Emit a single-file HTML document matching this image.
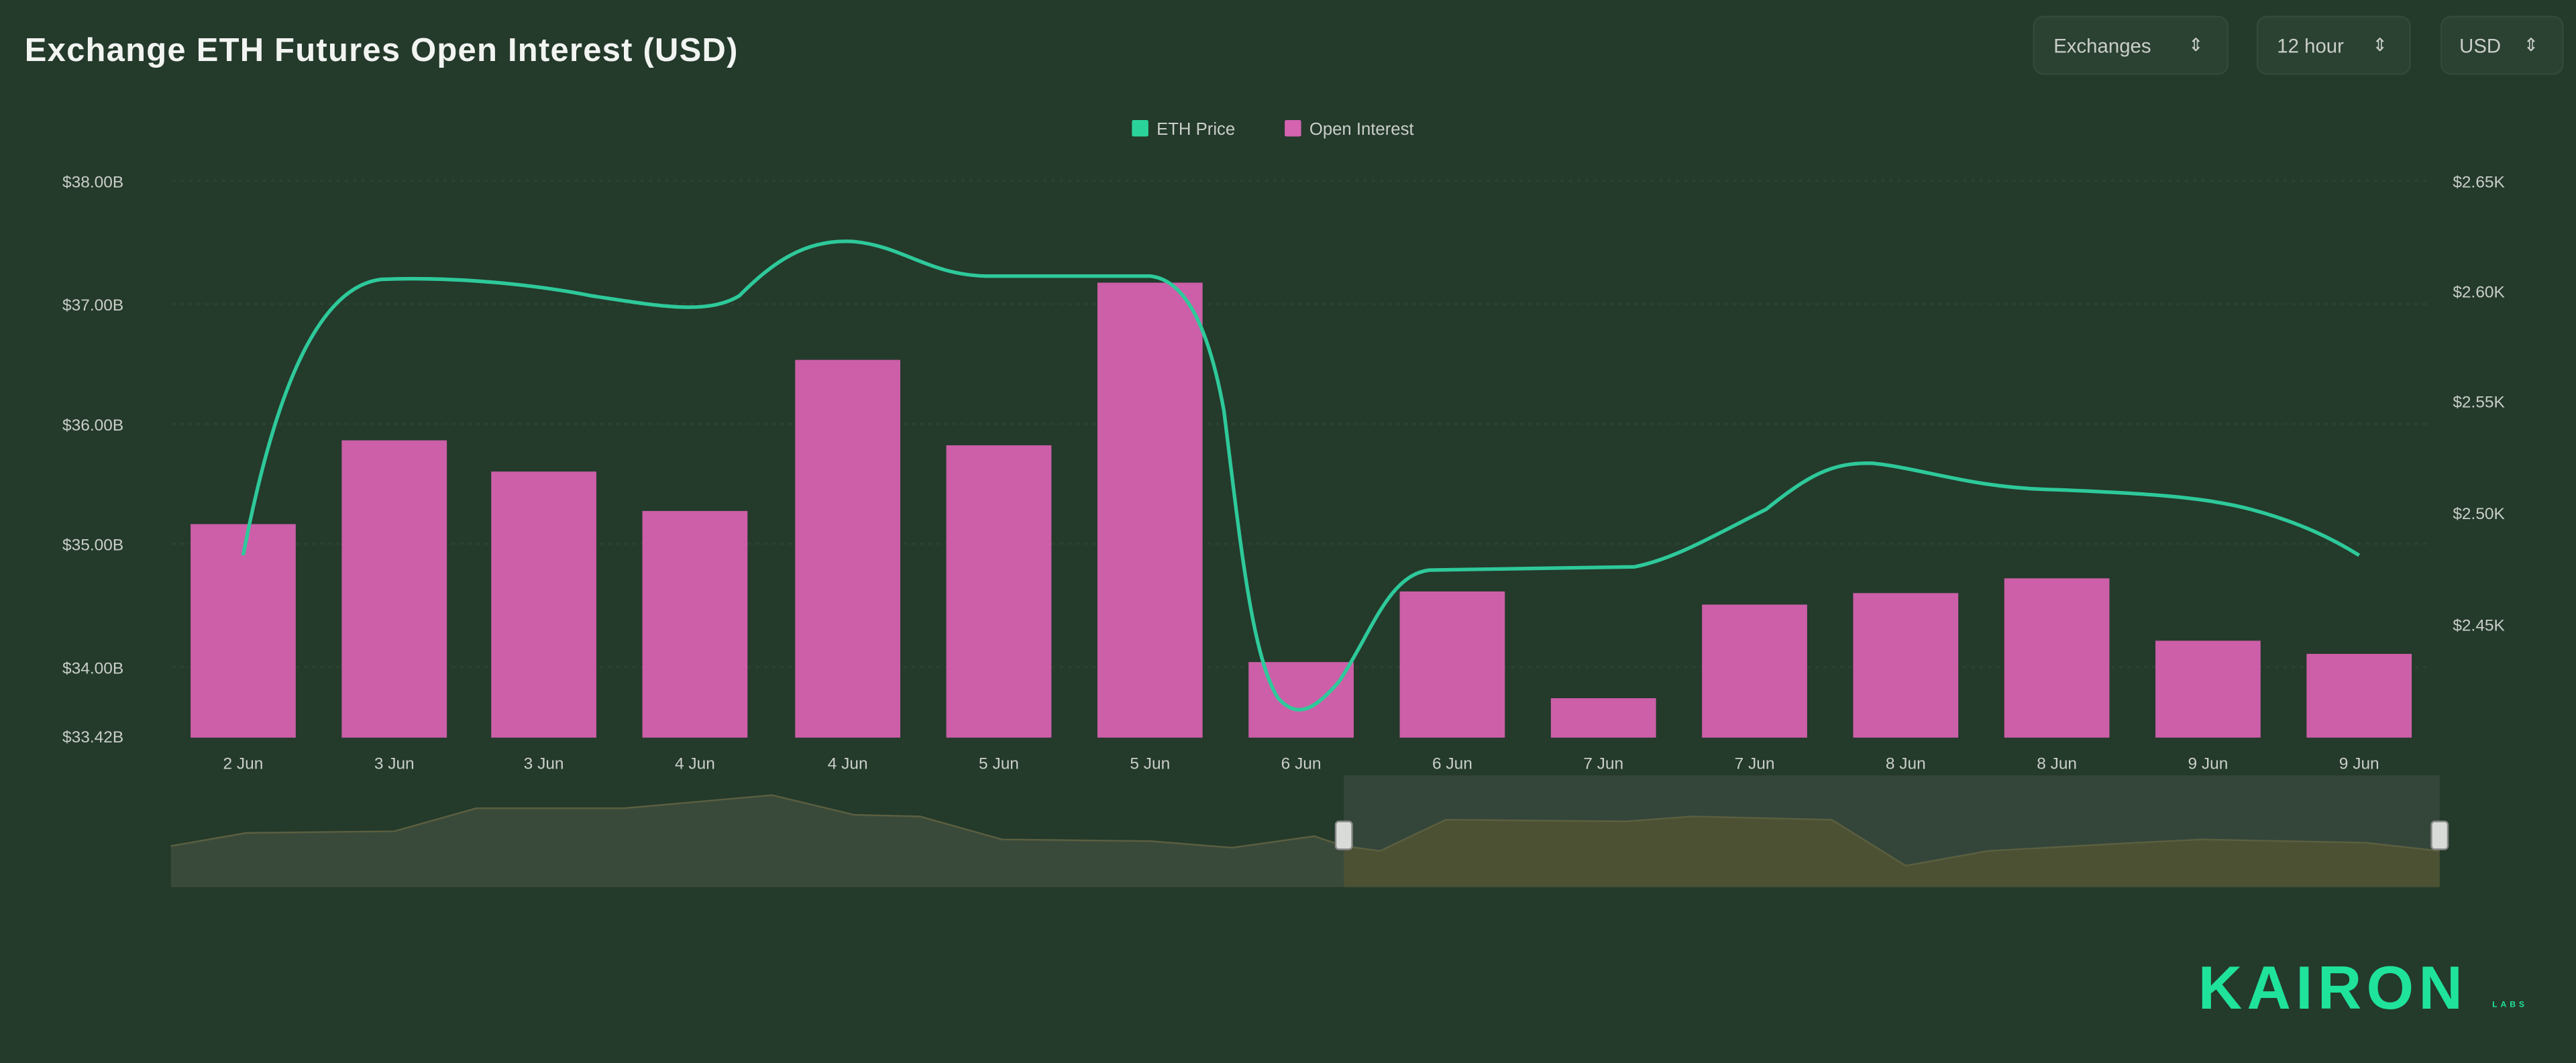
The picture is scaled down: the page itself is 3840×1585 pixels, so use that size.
<!DOCTYPE html>
<html><head><meta charset="utf-8"><style>
html,body{margin:0;padding:0;background:#243a2b;}
svg{display:block}
text{font-family:"Liberation Sans",sans-serif;}
</style></head><body>
<svg width="3840" height="1585" viewBox="0 0 1568 647" xmlns="http://www.w3.org/2000/svg">
<rect width="1568" height="647" fill="#243a2b"/>
<text x="15" y="37" font-size="20" font-weight="bold" fill="#f2f4f2" letter-spacing="0.5">Exchange ETH Futures Open Interest (USD)</text>
<g font-size="12" fill="#c9cec9">
<rect x="1238" y="10" width="118" height="35" rx="6" fill="#2b4132" stroke="#33493a"/>
<text x="1250" y="32">Exchanges</text>
<text x="1332" y="31" font-size="11">⇕</text>
<rect x="1374" y="10" width="93" height="35" rx="6" fill="#2b4132" stroke="#33493a"/>
<text x="1386" y="32">12 hour</text>
<text x="1444" y="31" font-size="11">⇕</text>
<rect x="1486" y="10" width="74" height="35" rx="6" fill="#2b4132" stroke="#33493a"/>
<text x="1497" y="32">USD</text>
<text x="1536" y="31" font-size="11">⇕</text>
</g>
<rect x="689" y="73" width="10" height="10" rx="1" fill="#2bd39b"/>
<text x="704" y="82" font-size="10.5" fill="#c9cec9">ETH Price</text>
<rect x="782" y="73" width="10" height="10" rx="1" fill="#d463b0"/>
<text x="797" y="82" font-size="10.5" fill="#c9cec9">Open Interest</text>
<g stroke="#2e4434" stroke-width="1" stroke-dasharray="2,3">
<line x1="105" y1="110" x2="1480" y2="110"/><line x1="105" y1="185" x2="1480" y2="185"/><line x1="105" y1="258" x2="1480" y2="258"/><line x1="105" y1="331" x2="1480" y2="331"/><line x1="105" y1="406" x2="1480" y2="406"/>
</g>
<g font-size="10" fill="#c9cec9">
<text x="38" y="114">$38.00B</text><text x="38" y="189">$37.00B</text><text x="38" y="262">$36.00B</text><text x="38" y="335">$35.00B</text><text x="38" y="410">$34.00B</text><text x="38" y="452">$33.42B</text>
<text x="1493" y="114">$2.65K</text><text x="1493" y="181">$2.60K</text><text x="1493" y="248">$2.55K</text><text x="1493" y="316">$2.50K</text><text x="1493" y="384">$2.45K</text>
</g>
<g fill="#cc5fa8">
<rect x="116" y="319" width="64" height="130"/>
<rect x="208" y="268" width="64" height="181"/>
<rect x="299" y="287" width="64" height="162"/>
<rect x="391" y="311" width="64" height="138"/>
<rect x="484" y="219" width="64" height="230"/>
<rect x="576" y="271" width="64" height="178"/>
<rect x="668" y="172" width="64" height="277"/>
<rect x="760" y="403" width="64" height="46"/>
<rect x="852" y="360" width="64" height="89"/>
<rect x="944" y="425" width="64" height="24"/>
<rect x="1036" y="368" width="64" height="81"/>
<rect x="1128" y="361" width="64" height="88"/>
<rect x="1220" y="352" width="64" height="97"/>
<rect x="1312" y="390" width="64" height="59"/>
<rect x="1404" y="398" width="64" height="51"/>
</g>
<path d="M148,338 C165,250 190,175 232,170 C280,168 330,174 360,180 C400,186 430,192 450,180 C470,160 490,145 520,147 C550,150 565,167 600,168 L700,168 C720,170 735,195 745,250 C755,330 762,400 778,425 C790,438 800,432 815,415 C835,385 845,350 870,347 L995,345 C1020,340 1045,325 1075,310 C1100,290 1115,281 1140,282 C1170,285 1200,297 1250,298 C1300,300 1340,302 1370,310 C1400,318 1420,328 1436,338" fill="none" stroke="#2ec99a" stroke-width="2.2"/>
<g font-size="10" fill="#c9cec9" text-anchor="middle">
<text x="148" y="468">2 Jun</text><text x="240" y="468">3 Jun</text><text x="331" y="468">3 Jun</text><text x="423" y="468">4 Jun</text><text x="516" y="468">4 Jun</text><text x="608" y="468">5 Jun</text><text x="700" y="468">5 Jun</text><text x="792" y="468">6 Jun</text><text x="884" y="468">6 Jun</text><text x="976" y="468">7 Jun</text><text x="1068" y="468">7 Jun</text><text x="1160" y="468">8 Jun</text><text x="1252" y="468">8 Jun</text><text x="1344" y="468">9 Jun</text><text x="1436" y="468">9 Jun</text>
</g>
<rect x="818" y="472" width="667" height="68" fill="#34463a"/>
<path d="M104,540 L104,515 L150,507 L240,506 L290,492 L380,492 L470,484 L520,496 L560,497 L610,511 L700,512 L750,516 L800,509 L818,515 L818,540 Z" fill="#3a4a3a"/>
<path d="M818,540 L818,515 L840,518 L880,499 L990,500 L1030,497 L1115,499 L1160,527 L1210,518 L1300,513 L1340,511 L1440,513 L1485,518 L1485,540 Z" fill="#4c5133"/>
<path d="M104,515 L150,507 L240,506 L290,492 L380,492 L470,484 L520,496 L560,497 L610,511 L700,512 L750,516 L800,509 L818,515 L840,518 L880,499 L990,500 L1030,497 L1115,499 L1160,527 L1210,518 L1300,513 L1340,511 L1440,513 L1485,518" fill="none" stroke="#5b5f40" stroke-width="1"/>
<rect x="813" y="500" width="10" height="17" rx="2" fill="#d8dbd8" stroke="#888"/>
<rect x="1480" y="500" width="10" height="17" rx="2" fill="#d8dbd8" stroke="#888"/>
<text x="1338" y="614" font-size="37" font-weight="bold" fill="#1fe39b" letter-spacing="3">KAIRON</text>
<text x="1517" y="613" font-size="5" font-weight="bold" fill="#1fe39b" letter-spacing="2">LABS</text>
</svg>
</body></html>
